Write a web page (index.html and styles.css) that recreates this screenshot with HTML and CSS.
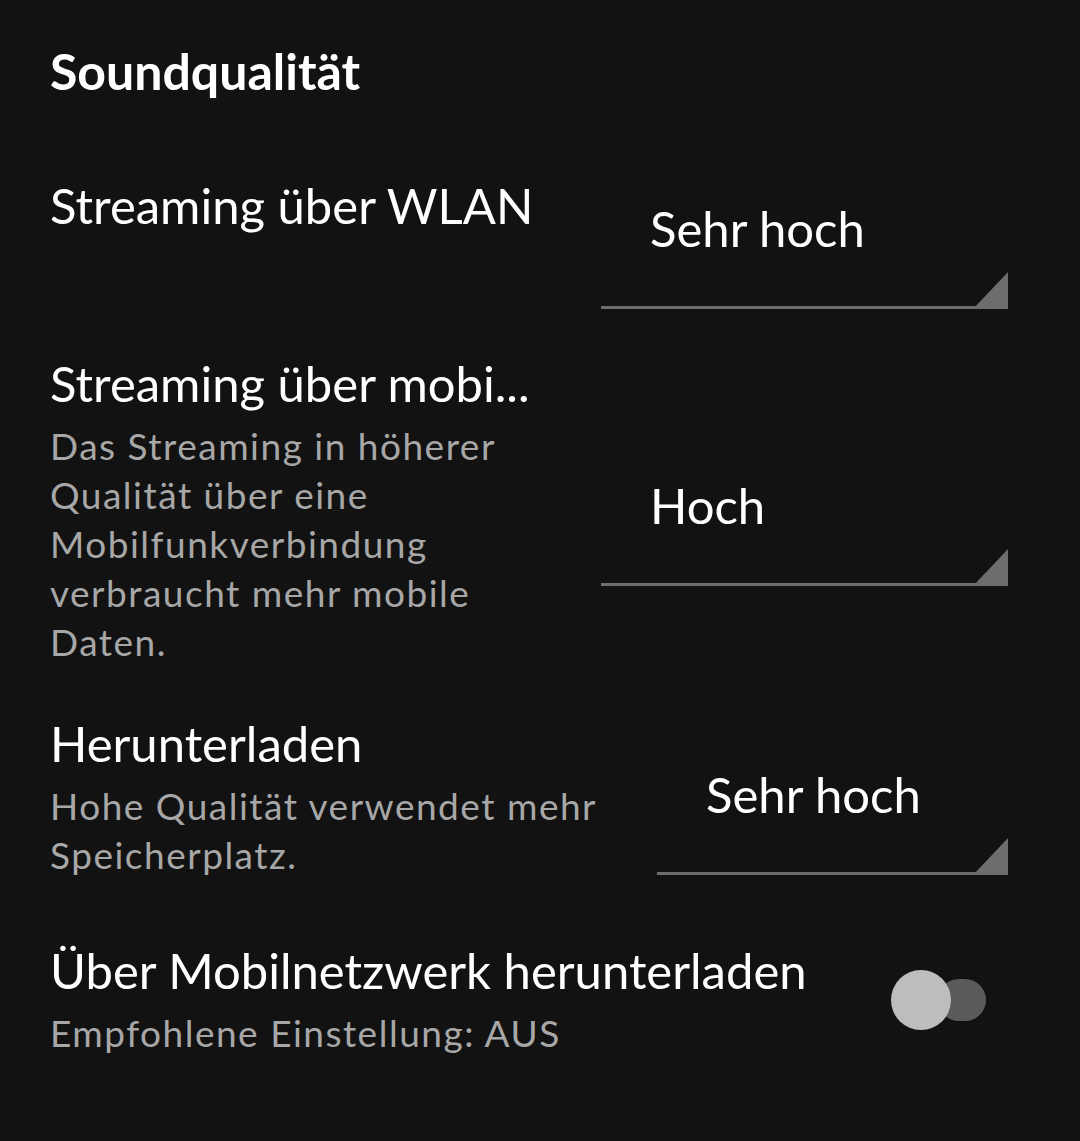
FILE: index.html
```html
<!DOCTYPE html>
<html lang="de">
  <head>
    <meta charset="UTF-8" />
    <meta name="viewport" content="width=device-width, initial-scale=1.0" />
    <title>Soundqualität</title>
    <link rel="stylesheet" href="styles.css">
  </head>
  <body>
    <div class="settings">
      <h2 class="section-title">Soundqualität</h2>

      <div class="setting setting-wlan">
        <div class="setting-text">
          <div class="setting-label">Streaming über WLAN</div>
        </div>
        <div class="spinner">
          <span class="spinner-value">Sehr hoch</span>
        </div>
      </div>

      <div class="setting setting-mobile">
        <div class="setting-text">
          <div class="setting-label">Streaming über mobi...</div>
          <div class="setting-desc">Das Streaming in höherer Qualität über eine Mobilfunkverbindung verbraucht mehr mobile Daten.</div>
        </div>
        <div class="spinner">
          <span class="spinner-value">Hoch</span>
        </div>
      </div>

      <div class="setting setting-download">
        <div class="setting-text">
          <div class="setting-label">Herunterladen</div>
          <div class="setting-desc">Hohe Qualität verwendet mehr Speicherplatz.</div>
        </div>
        <div class="spinner spinner-narrow">
          <span class="spinner-value">Sehr hoch</span>
        </div>
      </div>

      <div class="setting setting-switch">
        <div class="setting-text">
          <div class="setting-label">Über Mobilnetzwerk herunterladen</div>
          <div class="setting-desc">Empfohlene Einstellung: AUS</div>
        </div>
        <div class="switch">
          <span class="switch-thumb"></span>
        </div>
      </div>
    </div>
  </body>
</html>
```

FILE: styles.css
```css
/* Einstellungen - Soundqualität */
body {
  margin: 0;
  background-color: #121212;
  color: #ffffff;
  font-family: "Lato", "Liberation Sans", sans-serif;
}

.settings {
  padding: 41px 72px 40px 50px;
}

.section-title {
  margin: 0;
  font-size: 50px;
  line-height: 60px;
  font-weight: 700;
}

.setting {
  display: flex;
  align-items: flex-start;
  justify-content: space-between;
}

.setting-text {
  flex: 1;
  min-width: 0;
}

.setting-label {
  font-size: 49px;
  line-height: 60px;
  white-space: nowrap;
}

.setting-desc {
  margin-top: 8px;
  font-size: 37px;
  line-height: 49px;
  letter-spacing: 1.5px;
  color: #a7a7a7;
}

.setting-wlan {
  margin-top: 74px;
}

.setting-mobile {
  margin-top: 44px;
}

.setting-mobile .setting-text {
  flex: 0 0 530px;
}

.setting-download {
  margin-top: 47px;
}

.setting-switch {
  margin-top: 61px;
}

/* Spinner */
.spinner {
  position: relative;
  box-sizing: border-box;
  width: 407px;
  height: 111px;
  padding-left: 49px;
  border-bottom: 3px solid #6d6d6d;
  flex-shrink: 0;
}

.spinner::after {
  content: "";
  position: absolute;
  right: 0;
  bottom: -3px;
  width: 35px;
  height: 37px;
  background-color: #6d6d6d;
  clip-path: polygon(100% 0, 100% 100%, 0 100%);
}

.spinner-narrow {
  width: 351px;
}

.spinner-value {
  font-size: 49px;
  line-height: 60px;
}

.setting-wlan .spinner {
  margin-top: 23px;
}

.setting-mobile .spinner {
  margin-top: 122px;
}

.setting-download .spinner {
  margin-top: 51px;
}

/* Switch */
.switch {
  position: relative;
  flex-shrink: 0;
  width: 48px;
  height: 42px;
  margin-top: 39px;
  margin-right: 22px;
  border-radius: 21px;
  background-color: #5a5a5a;
}

.switch-thumb {
  position: absolute;
  left: -47px;
  top: -9px;
  width: 60px;
  height: 60px;
  border-radius: 50%;
  background-color: #bdbdbd;
}
```
